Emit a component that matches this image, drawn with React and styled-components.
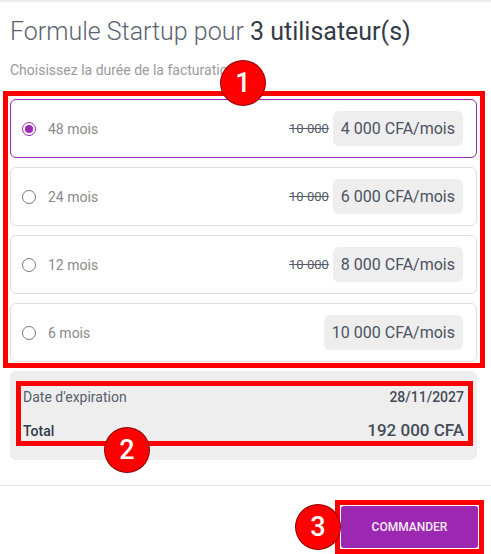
import React, { useState } from "react";
import styled, { createGlobalStyle } from "styled-components";

const GlobalStyle = createGlobalStyle`
  body {
    margin: 0;
    background: #fff;
    font-family: Roboto, "Liberation Sans", Arial, sans-serif;
  }
`;

const Page = styled.div`
  width: 491px;
  border-top: 2px solid #eaecef;
  box-sizing: border-box;
`;

const Header = styled.div`
  padding: 16px 10px 0;
`;

const Title = styled.h1`
  margin: 0;
  font-size: 25px;
  line-height: 28px;
  font-weight: 300;
  color: #5b6370;

  strong {
    font-weight: 400;
    color: #343b47;
  }
`;

const Subtitle = styled.p`
  margin: 16px 0 0;
  font-size: 14px;
  line-height: 16px;
  color: #9a9a9a;
`;

const Marker = styled.div`
  position: relative;
  border: 5px solid #ff0000;
  padding: ${(p) => p.$pad || "0"};
  margin: ${(p) => p.$margin || "0"};
`;

const Badge = styled.span`
  position: absolute;
  left: ${(p) => p.$x}px;
  top: ${(p) => p.$y}px;
  width: 44px;
  height: 44px;
  border-radius: 50%;
  background: #ff0000;
  box-shadow: 0 0 0 1px #8a0000;
  color: #fff;
  font-size: 27px;
  font-weight: 500;
  display: flex;
  align-items: center;
  justify-content: center;
  z-index: 2;
`;

const Options = styled.div`
  display: flex;
  flex-direction: column;
  gap: 9px;
`;

const Card = styled.label`
  display: flex;
  align-items: center;
  height: 59px;
  box-sizing: border-box;
  padding: 0 13px 0 11px;
  border: 1px solid ${(p) => (p.$active ? "#9c27b0" : "#e0e0e0")};
  border-radius: 6px;
  cursor: pointer;
`;

const Radio = styled.span`
  width: 14px;
  height: 14px;
  box-sizing: border-box;
  border-radius: 50%;
  border: 1.5px solid ${(p) => (p.$active ? "#9c27b0" : "#777")};
  display: flex;
  align-items: center;
  justify-content: center;
  flex-shrink: 0;

  &::after {
    content: "";
    width: 8px;
    height: 8px;
    border-radius: 50%;
    background: ${(p) => (p.$active ? "#9c27b0" : "transparent")};
  }
`;

const Duration = styled.span`
  margin-left: 12px;
  font-size: 14px;
  color: #8a8a8a;
  flex: 1;
`;

const OldPrice = styled.s`
  font-size: 13px;
  color: #555d69;
  margin-right: 4px;
`;

const Price = styled.span`
  background: #eeeeee;
  border-radius: 6px;
  padding: 0 8px;
  height: 35px;
  display: flex;
  align-items: center;
  font-size: 16px;
  color: #4b5361;
`;

const Summary = styled.div`
  margin: 3px 14px 0 10px;
  background: #eeeeee;
  border-radius: 6px;
  padding: 10px 4px 14px 6px;
`;

const SummaryRows = styled.div`
  display: flex;
  flex-direction: column;
  justify-content: space-between;
  height: 55px;
  box-sizing: border-box;
  padding: 3px 4px 1px 2px;
`;

const Row = styled.div`
  display: flex;
  justify-content: space-between;
  align-items: baseline;
  font-size: 14px;
  color: ${(p) => (p.$strong ? "#333a45" : "#565e6a")};
  font-weight: ${(p) => (p.$strong ? 500 : 400)};
`;

const Value = styled.span`
  font-weight: 500;
  color: #454c58;
  font-size: ${(p) => (p.$big ? "17px" : "14px")};
`;

const Divider = styled.hr`
  margin: 25px 0 0;
  border: 0;
  border-top: 1px solid #e6e6e6;
`;

const Footer = styled.div`
  display: flex;
  justify-content: flex-end;
  padding: 14px 7px 0 0;
`;

const OrderButton = styled.button`
  width: 137px;
  height: 42px;
  border: 0;
  border-radius: 3px;
  background: #9c27b0;
  color: #f6ecf8;
  font-family: Roboto, "Liberation Sans", Arial, sans-serif;
  font-size: 12px;
  font-weight: 500;
  text-transform: uppercase;
  cursor: pointer;
  display: block;
`;

const plans = [
  { id: 48, old: "10\u00a0000", price: "4\u00a0000" },
  { id: 24, old: "10\u00a0000", price: "6\u00a0000" },
  { id: 12, old: "10\u00a0000", price: "8\u00a0000" },
  { id: 6, old: null, price: "10\u00a0000" },
];

export default function App() {
  const [selected, setSelected] = useState(48);

  return (
    <Page>
      <GlobalStyle />
      <Header>
        <Title>
          Formule Startup pour <strong>3 utilisateur(s)</strong>
        </Title>
        <Subtitle>Choisissez la durée de la facturation</Subtitle>
      </Header>

      <Marker $margin="13px 6px 0 3px" $pad="3px 3px 1px 2px">
        <Badge $x={213} $y={-35}>1</Badge>
        <Options>
          {plans.map((plan) => (
            <Card
              key={plan.id}
              $active={selected === plan.id}
              onClick={() => setSelected(plan.id)}
            >
              <Radio $active={selected === plan.id} />
              <Duration>{plan.id} mois</Duration>
              {plan.old && <OldPrice>{plan.old}</OldPrice>}
              <Price>{plan.price} CFA/mois</Price>
            </Card>
          ))}
        </Options>
      </Marker>

      <Summary>
        <Marker>
          <Badge $x={84} $y={42}>2</Badge>
          <SummaryRows>
            <Row>
              <span>Date d'expiration</span>
              <Value>28/11/2027</Value>
            </Row>
            <Row $strong>
              <span>Total</span>
              <Value $big>192{"\u00a0"}000 CFA</Value>
            </Row>
          </SummaryRows>
        </Marker>
      </Summary>

      <Divider />

      <Footer>
        <Marker $pad="1px">
          <Badge $x={-44} $y={0}>3</Badge>
          <OrderButton>Commander</OrderButton>
        </Marker>
      </Footer>
    </Page>
  );
}
